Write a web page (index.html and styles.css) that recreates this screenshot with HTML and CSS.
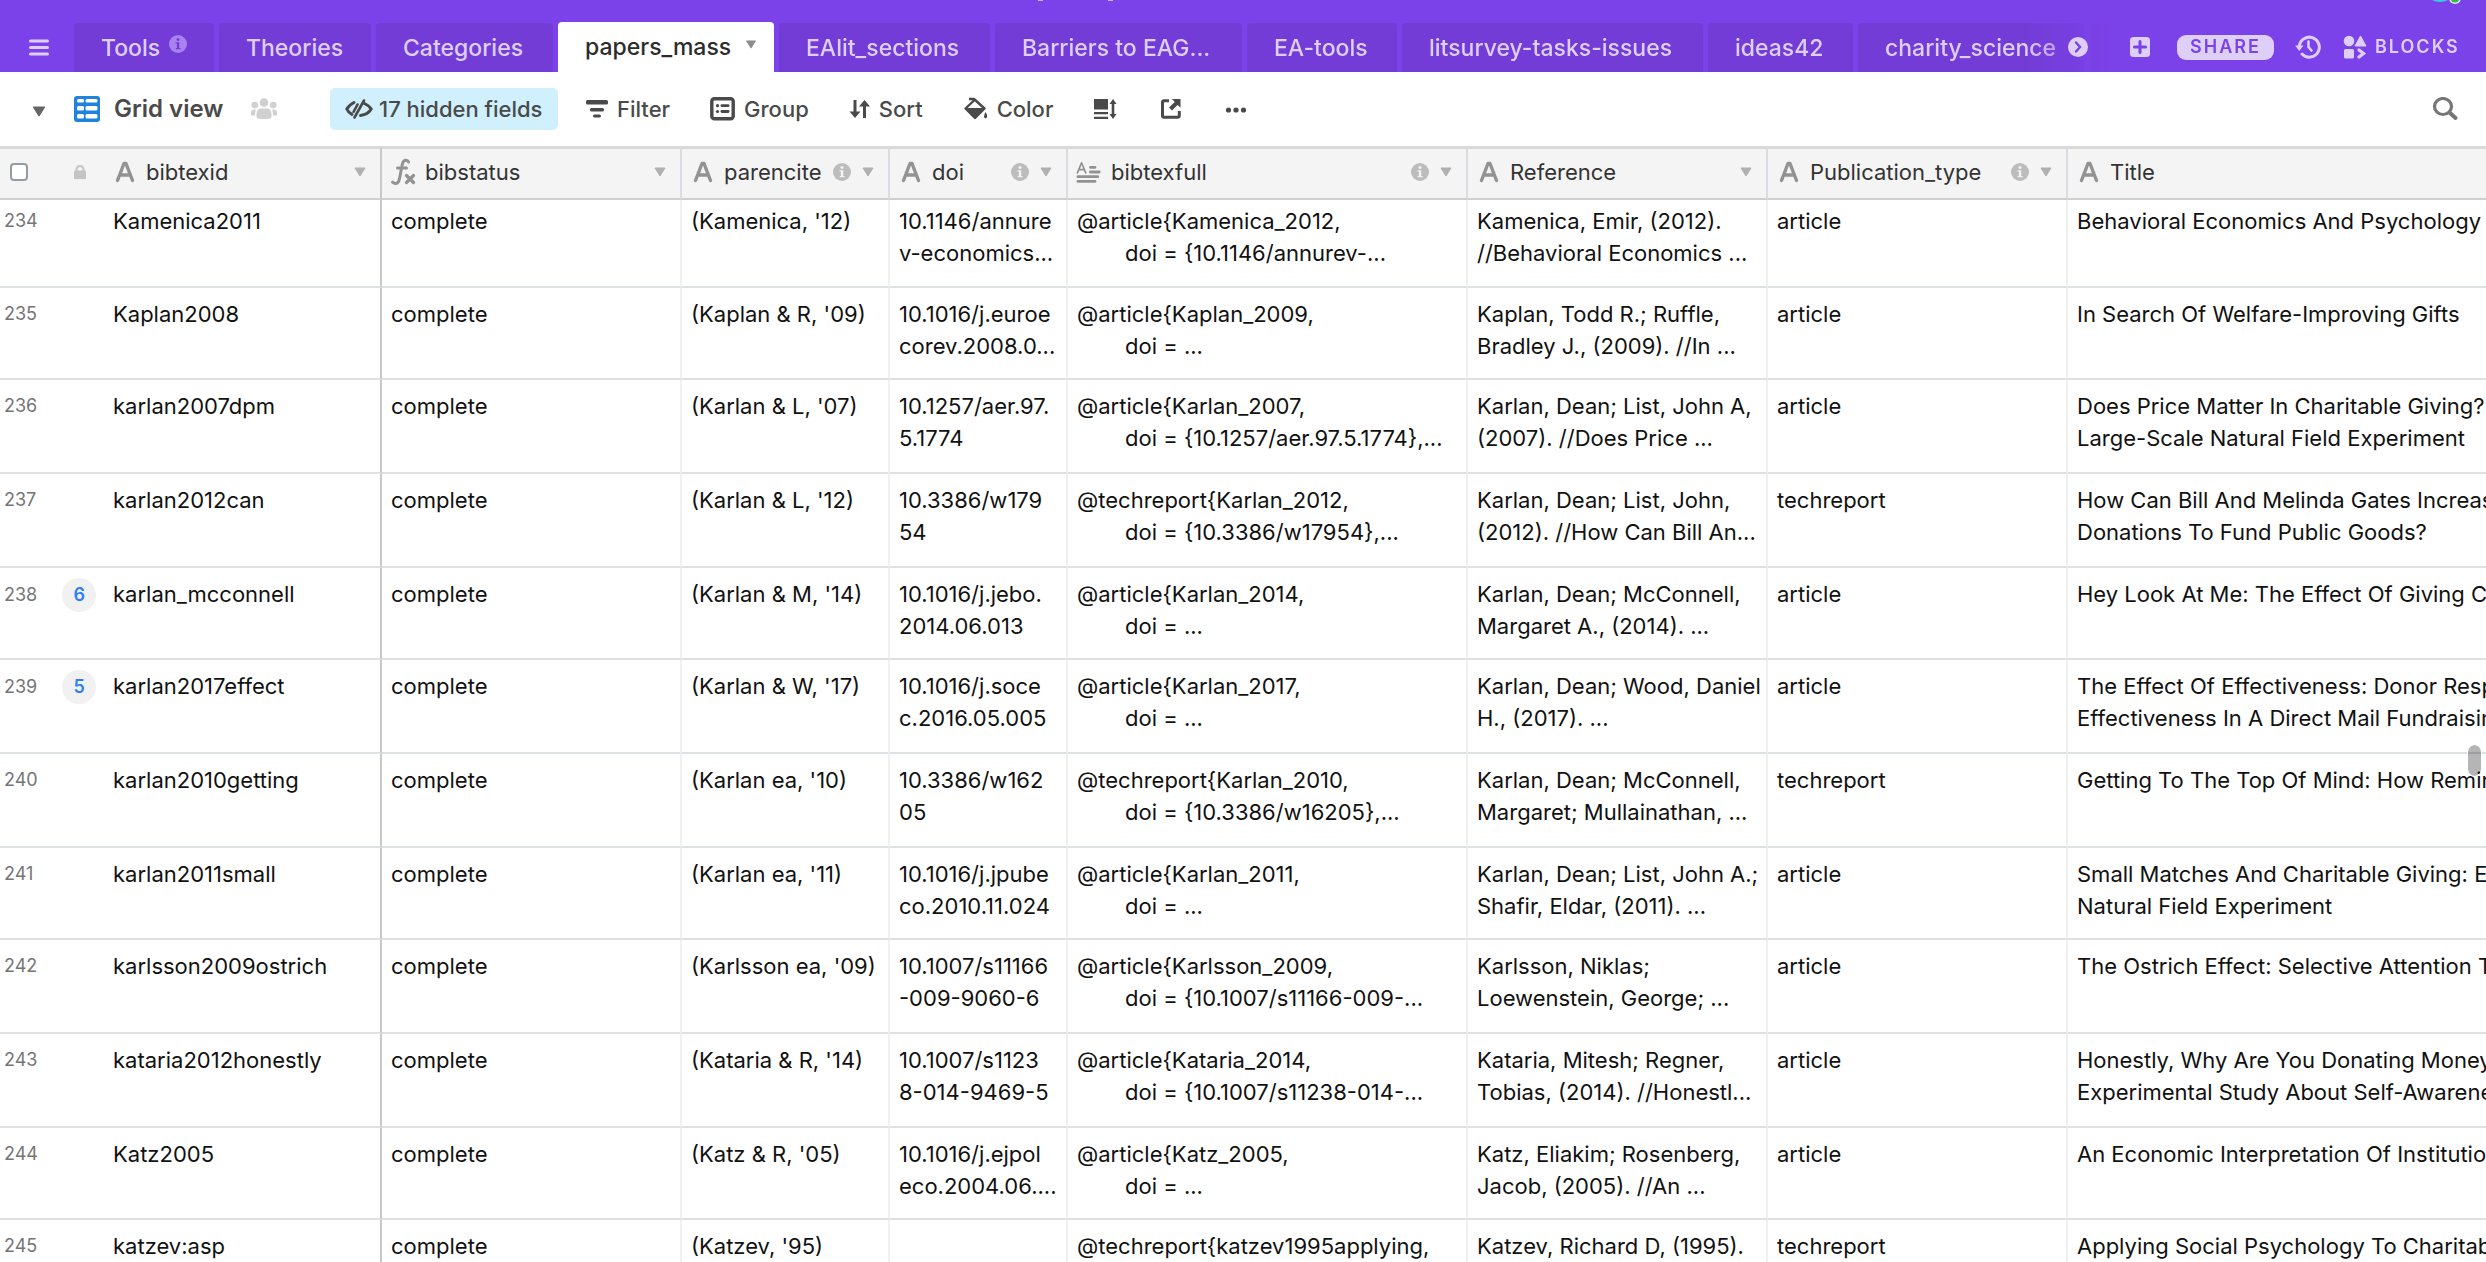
FILE: index.html
```html
<!DOCTYPE html>
<html lang="en">
<head>
<meta charset="utf-8">
<title>papers_mass</title>
<link rel="stylesheet" href="styles.css">
</head>
<body>
<svg class="sprite" aria-hidden="true">
  <symbol id="i-text" viewBox="0 0 20 22"><path d="M2.500 19.500 L9 2.500 H11 L17.500 19.500 M5 14 H15" fill="none" stroke="currentColor" stroke-width="3.400" stroke-linecap="round" stroke-linejoin="round"/></symbol>
  <symbol id="i-long" viewBox="0 0 28 24"><path d="M1.500 13 L6 2 L10.500 13 M3 9.500 H9" fill="none" stroke="currentColor" stroke-width="1.800" stroke-linecap="round" stroke-linejoin="round"/><path d="M15.500 7 H20.500 M15.500 12 H25 M2 17 H23.500 M2 22 H20.500" fill="none" stroke="currentColor" stroke-width="3" stroke-linecap="round"/></symbol>
  <symbol id="i-fx" viewBox="0 0 26 28"><path d="M18.500 4 C17.500 1.200 13.500 1.500 12.500 5.500 L9.500 20.500 C8.700 25.500 5.500 26.800 2.500 24.200 M7.500 10 H16.500" fill="none" stroke="currentColor" stroke-width="3" stroke-linecap="round"/><path d="M16.500 17.500 L23.500 24.500 M23.500 17.500 L16.500 24.500" stroke="currentColor" stroke-width="3.200" stroke-linecap="round"/></symbol>
  <symbol id="i-info" viewBox="0 0 18 18"><circle cx="9" cy="9" r="9" fill="currentColor"/><circle cx="9" cy="4.600" r="1.500" class="hole"/><path d="M6.500 7.300 H10.200 V13 H11.500 V14.300 H6.700 V13 H7.900 V8.600 H6.500 Z" class="hole"/></symbol>
  <symbol id="i-tri" viewBox="0 0 12 10"><path d="M1 1 H11 L6 9 Z" fill="currentColor" stroke="currentColor" stroke-linejoin="round"/></symbol>
</svg>

<header class="topbar">
  <svg class="peek" width="90" height="4" viewBox="0 0 90 4" aria-hidden="true"><path d="M4 0 H9 M74 0 H79" stroke="#c9b3f5" stroke-width="2"/></svg>
  <svg class="presence" width="32" height="4" viewBox="0 0 32 4" aria-hidden="true"><circle cx="10" cy="-14" r="16" fill="#3cc8e0"/><circle cx="25" cy="-2" r="6" fill="#e6dcfa"/><circle cx="25" cy="-2" r="4.500" fill="#2fbf3f"/></svg>
  <button class="menu" aria-label="Menu"><svg width="20" height="17" viewBox="0 0 20 17"><path d="M1.500 2 H18.500 M1.500 8.500 H18.500 M1.500 15 H18.500" stroke="currentColor" stroke-width="3" stroke-linecap="round"/></svg></button>
  <nav class="tabs" aria-label="Tables">
    <a class="tab" href="#tools">Tools<svg class="tab-info" width="18" height="18"><use href="#i-info"/></svg></a>
    <a class="tab" href="#theories">Theories</a>
    <a class="tab" href="#categories">Categories</a>
    <a class="tab active" href="#papers" aria-current="page">papers_mass<svg class="tab-caret" width="12" height="9"><use href="#i-tri"/></svg></a>
    <a class="tab" href="#ealit">EAlit_sections</a>
    <a class="tab" href="#barriers">Barriers to EAG...</a>
    <a class="tab" href="#eatools">EA-tools</a>
    <a class="tab" href="#litsurvey">litsurvey-tasks-issues</a>
    <a class="tab" href="#ideas">ideas42</a>
    <a class="tab" href="#charity">charity_science</a>
    <span class="tab"></span>
  </nav>
  <div class="top-actions">
    <button aria-label="More tables"><svg width="20" height="20" viewBox="0 0 20 20"><circle cx="10" cy="10" r="10" fill="currentColor"/><path d="M8 5.500 L12 10 L8 14.500" class="cut" stroke-width="2.400"/></svg></button>
    <button class="add" aria-label="Add table"><svg width="20" height="20" viewBox="0 0 20 20"><rect width="20" height="20" rx="3.500" fill="currentColor"/><path d="M10 4.500 V15.500 M4.500 10 H15.500" class="cut" stroke-width="3"/></svg></button>
    <button class="share">SHARE</button>
    <button class="history" aria-label="History"><svg width="26" height="24" viewBox="0 0 26 24"><path d="M4.300 12.500 A 10 10 0 1 1 7 19" fill="none" stroke="currentColor" stroke-width="3" stroke-linecap="round"/><path d="M0 10.500 H8.500 L4.300 16 Z" fill="currentColor"/><path d="M13.500 6.500 V12 L16.500 15.500" fill="none" stroke="currentColor" stroke-width="2.600" stroke-linecap="round"/></svg></button>
    <button class="blocks"><svg width="24" height="24" viewBox="0 0 24 24"><circle cx="6" cy="6" r="5.300" fill="currentColor"/><path d="M17.500 1 L23 11 H12 Z" fill="currentColor" stroke="currentColor" stroke-linejoin="round"/><rect x="1" y="14" width="10" height="9.500" rx="1.500" fill="currentColor"/><path d="M16 15 L20.500 18.500 L16 22" fill="none" stroke="currentColor" stroke-width="3.200" stroke-linecap="round"/></svg>BLOCKS</button>
  </div>
</header>

<div class="toolbar">
  <button class="views" aria-label="Views"><svg width="14" height="11"><use href="#i-tri"/></svg></button>
  <button class="view-name"><svg width="26" height="26" viewBox="0 0 26 26"><rect width="26" height="26" rx="3" fill="#1f82dc"/><g fill="#fff"><rect x="3" y="3" width="7" height="3.500" rx="1.500"/><rect x="11.500" y="3" width="12" height="3.500" rx="1.500"/><rect x="3" y="10" width="7" height="4.500" rx="1.500"/><rect x="11.500" y="10" width="12" height="4.500" rx="1.500"/><rect x="3" y="18" width="7" height="4.500" rx="1.500"/><rect x="11.500" y="18" width="12" height="4.500" rx="1.500"/></g></svg>Grid view</button>
  <svg class="people" width="26" height="22" viewBox="0 0 26 22" aria-label="Collaborative view"><g fill="currentColor"><circle cx="13" cy="4.500" r="4.300"/><circle cx="3.800" cy="7" r="3.300"/><circle cx="22.200" cy="7" r="3.300"/><path d="M5.500 21 V16 Q5.500 10.500 11 10.500 H15 Q20.500 10.500 20.500 16 V19 Q20.500 21 13 21 Q5.500 21 5.500 19 Z"/><path d="M0 17.500 V14.500 Q0 11.500 3.500 11.500 H5 Q4 13.500 4 17.500 Z M26 17.500 V14.500 Q26 11.500 22.500 11.500 H21 Q22 13.500 22 17.500 Z"/></g></svg>
  <button class="tool hidden-fields"><svg width="28" height="20" viewBox="0 0 28 20"><g fill="none" stroke="currentColor" stroke-width="3"><path d="M9 3.500 Q4 6 1.800 10 Q3 13 7 15.500" stroke-linecap="round"/><path d="M18.500 4 Q24 6.500 26.200 10 Q23 15.500 15.500 16.500" stroke-linecap="round"/><path d="M19 1.500 L9.500 18.500 M12.500 5.500 L8.500 13" stroke-width="2.600" stroke-linecap="round"/></g></svg>17 hidden fields</button>
  <button class="tool"><svg width="24" height="20" viewBox="0 0 24 20"><g fill="currentColor"><rect x="1" y="1" width="22" height="4.500" rx="1.500"/><rect x="5" y="9" width="14" height="3.500" rx="1.500"/><rect x="8" y="15.500" width="8" height="3" rx="1.500"/></g></svg>Filter</button>
  <button class="tool"><svg width="26" height="24" viewBox="0 0 26 24"><rect x="1.800" y="1.800" width="21.400" height="19.900" rx="2.500" fill="none" stroke="currentColor" stroke-width="3.400"/><g fill="currentColor"><circle cx="7.500" cy="8.700" r="1.600"/><rect x="10.500" y="7.300" width="9" height="2.800" rx="1.400"/><circle cx="7.500" cy="14.500" r="1.600"/><rect x="10.500" y="13.100" width="9" height="2.800" rx="1.400"/></g></svg>Group</button>
  <button class="tool"><svg width="22" height="20" viewBox="0 0 22 20"><path d="M6 1 V16 M15.500 19 V4" stroke="currentColor" stroke-width="3"/><path d="M0.500 12.500 H11.500 L6 19 Z M10 7.500 H21 L15.500 1 Z" fill="currentColor"/></svg>Sort</button>
  <button class="tool"><svg width="26" height="24" viewBox="0 0 26 24"><path d="M6 2 H11 L21.500 11.500 L12 21 L2.500 11.500 L11.500 3" fill="none" stroke="currentColor" stroke-width="2.400" stroke-linejoin="round"/><path d="M2 11 H22 L12 22 Z" fill="currentColor"/><path d="M22.500 15 Q26 20 22.500 21.500 Q19.500 20.500 22.500 15 Z" fill="currentColor"/></svg>Color</button>
  <button class="tool icon-only" aria-label="Row height"><svg width="24" height="20" viewBox="0 0 24 20"><path d="M1 0 H15 V10.500 H1 Z M1 13 H15 V15.200 H1 Z M1 17.800 H15 V20 H1 Z" fill="currentColor"/><path d="M20 3 V17" stroke="currentColor" stroke-width="2.600"/><path d="M16.500 5 H23.500 L20 0 Z M16.500 15 H23.500 L20 20 Z" fill="currentColor"/></svg></button>
  <button class="tool icon-only" aria-label="Share view"><svg width="22" height="20" viewBox="0 0 22 20"><path d="M9 1.800 H4 Q2.500 1.800 2.500 3.500 V16.500 Q2.500 18.200 4 18.200 H17.500 Q19.300 18.200 19.300 16.500 V12" fill="none" stroke="currentColor" stroke-width="3"/><path d="M12 0 H20.500 V8.500 L17.500 6 L12 11.500 L9 8.500 L14.800 3 Z" fill="currentColor"/></svg></button>
  <button class="tool icon-only" aria-label="More"><svg width="22" height="20" viewBox="0 0 22 20"><g fill="currentColor"><circle cx="3.500" cy="11" r="2.600"/><circle cx="11" cy="11" r="2.600"/><circle cx="18.500" cy="11" r="2.600"/></g></svg></button>
  <button class="search" aria-label="Search"><svg width="26" height="24" viewBox="0 0 26 24"><ellipse cx="11" cy="9.500" rx="8.500" ry="8" fill="none" stroke="currentColor" stroke-width="3.200"/><path d="M17.500 15.500 L23.500 21" stroke="currentColor" stroke-width="4" stroke-linecap="round"/></svg></button>
</div>

<main class="grid">
<table>
  <colgroup><col class="c-num"><col class="c-id"><col class="c-wide"><col class="c-cite"><col class="c-doi"><col class="c-full"><col class="c-wide"><col class="c-wide"><col></colgroup>
  <thead>
    <tr>
      <th class="num"><div class="head"><input type="checkbox" aria-label="Select all rows"><svg class="lock" width="12" height="14" viewBox="0 0 12 14"><path d="M2.500 6 V4.500 A3.500 3.500 0 0 1 9.500 4.500 V6" fill="none" stroke="currentColor" stroke-width="2"/><rect y="5.500" width="12" height="8.500" rx="1.200" fill="currentColor"/></svg></div></th>
      <th class="primary"><div class="head"><svg class="type" width="20" height="22"><use href="#i-text"/></svg><span>bibtexid</span><svg class="caret" width="12" height="10"><use href="#i-tri"/></svg></div></th>
      <th><div class="head wide-icon"><svg class="type" width="26" height="28"><use href="#i-fx"/></svg><span>bibstatus</span><svg class="caret" width="12" height="10"><use href="#i-tri"/></svg></div></th>
      <th><div class="head"><svg class="type" width="20" height="22"><use href="#i-text"/></svg><span>parencite</span><svg class="info" width="18" height="18"><use href="#i-info"/></svg><svg class="caret" width="12" height="10"><use href="#i-tri"/></svg></div></th>
      <th><div class="head"><svg class="type" width="20" height="22"><use href="#i-text"/></svg><span>doi</span><svg class="info" width="18" height="18"><use href="#i-info"/></svg><svg class="caret" width="12" height="10"><use href="#i-tri"/></svg></div></th>
      <th><div class="head wide-icon"><svg class="type" width="26" height="24"><use href="#i-long"/></svg><span>bibtexfull</span><svg class="info" width="18" height="18"><use href="#i-info"/></svg><svg class="caret" width="12" height="10"><use href="#i-tri"/></svg></div></th>
      <th><div class="head"><svg class="type" width="20" height="22"><use href="#i-text"/></svg><span>Reference</span><svg class="caret" width="12" height="10"><use href="#i-tri"/></svg></div></th>
      <th><div class="head"><svg class="type" width="20" height="22"><use href="#i-text"/></svg><span>Publication_type</span><svg class="info" width="18" height="18"><use href="#i-info"/></svg><svg class="caret" width="12" height="10"><use href="#i-tri"/></svg></div></th>
      <th><div class="head"><svg class="type" width="20" height="22"><use href="#i-text"/></svg><span>Title</span></div></th>
    </tr>
  </thead>
  <tbody>
    <tr class="under-header"><td class="num">234</td><td class="primary">Kamenica2011</td><td>complete</td><td>(Kamenica, '12)</td><td>10.1146/annure<br>v-economics...</td><td>@article{Kamenica_2012,<br><span class="indent">doi = {10.1146/annurev-...</span></td><td>Kamenica, Emir, (2012).<br>//Behavioral Economics ...</td><td>article</td><td>Behavioral Economics And Psychology Of</td></tr>
    <tr><td class="num">235</td><td class="primary">Kaplan2008</td><td>complete</td><td>(Kaplan &amp; R, '09)</td><td>10.1016/j.euroe<br>corev.2008.0...</td><td>@article{Kaplan_2009,<br><span class="indent">doi = ...</span></td><td>Kaplan, Todd R.; Ruffle,<br>Bradley J., (2009). //In ...</td><td>article</td><td>In Search Of Welfare-Improving Gifts</td></tr>
    <tr><td class="num">236</td><td class="primary">karlan2007dpm</td><td>complete</td><td>(Karlan &amp; L, '07)</td><td>10.1257/aer.97.<br>5.1774</td><td>@article{Karlan_2007,<br><span class="indent">doi = {10.1257/aer.97.5.1774},...</span></td><td>Karlan, Dean; List, John A,<br>(2007). //Does Price ...</td><td>article</td><td>Does Price Matter In Charitable Giving? Evidence<br>Large-Scale Natural Field Experiment</td></tr>
    <tr><td class="num">237</td><td class="primary">karlan2012can</td><td>complete</td><td>(Karlan &amp; L, '12)</td><td>10.3386/w179<br>54</td><td>@techreport{Karlan_2012,<br><span class="indent">doi = {10.3386/w17954},...</span></td><td>Karlan, Dean; List, John,<br>(2012). //How Can Bill An...</td><td>techreport</td><td>How Can Bill And Melinda Gates Increase<br>Donations To Fund Public Goods?</td></tr>
    <tr><td class="num">238<span class="comments">6</span></td><td class="primary">karlan_mcconnell</td><td>complete</td><td>(Karlan &amp; M, '14)</td><td>10.1016/j.jebo.<br>2014.06.013</td><td>@article{Karlan_2014,<br><span class="indent">doi = ...</span></td><td>Karlan, Dean; McConnell,<br>Margaret A., (2014). ...</td><td>article</td><td>Hey Look At Me: The Effect Of Giving Circles</td></tr>
    <tr><td class="num">239<span class="comments">5</span></td><td class="primary">karlan2017effect</td><td>complete</td><td>(Karlan &amp; W, '17)</td><td>10.1016/j.soce<br>c.2016.05.005</td><td>@article{Karlan_2017,<br><span class="indent">doi = ...</span></td><td>Karlan, Dean; Wood, Daniel<br>H., (2017). ...</td><td>article</td><td>The Effect Of Effectiveness: Donor Response<br>Effectiveness In A Direct Mail Fundraising</td></tr>
    <tr><td class="num">240</td><td class="primary">karlan2010getting</td><td>complete</td><td>(Karlan ea, '10)</td><td>10.3386/w162<br>05</td><td>@techreport{Karlan_2010,<br><span class="indent">doi = {10.3386/w16205},...</span></td><td>Karlan, Dean; McConnell,<br>Margaret; Mullainathan, ...</td><td>techreport</td><td>Getting To The Top Of Mind: How Reminders</td></tr>
    <tr><td class="num">241</td><td class="primary">karlan2011small</td><td>complete</td><td>(Karlan ea, '11)</td><td>10.1016/j.jpube<br>co.2010.11.024</td><td>@article{Karlan_2011,<br><span class="indent">doi = ...</span></td><td>Karlan, Dean; List, John A.;<br>Shafir, Eldar, (2011). ...</td><td>article</td><td>Small Matches And Charitable Giving: Evidence<br>Natural Field Experiment</td></tr>
    <tr><td class="num">242</td><td class="primary">karlsson2009ostrich</td><td>complete</td><td>(Karlsson ea, '09)</td><td>10.1007/s11166<br>-009-9060-6</td><td>@article{Karlsson_2009,<br><span class="indent">doi = {10.1007/s11166-009-...</span></td><td>Karlsson, Niklas;<br>Loewenstein, George; ...</td><td>article</td><td>The Ostrich Effect: Selective Attention To</td></tr>
    <tr><td class="num">243</td><td class="primary">kataria2012honestly</td><td>complete</td><td>(Kataria &amp; R, '14)</td><td>10.1007/s1123<br>8-014-9469-5</td><td>@article{Kataria_2014,<br><span class="indent">doi = {10.1007/s11238-014-...</span></td><td>Kataria, Mitesh; Regner,<br>Tobias, (2014). //Honestl...</td><td>article</td><td>Honestly, Why Are You Donating Money To<br>Experimental Study About Self-Awareness</td></tr>
    <tr><td class="num">244</td><td class="primary">Katz2005</td><td>complete</td><td>(Katz &amp; R, '05)</td><td>10.1016/j.ejpol<br>eco.2004.06....</td><td>@article{Katz_2005,<br><span class="indent">doi = ...</span></td><td>Katz, Eliakim; Rosenberg,<br>Jacob, (2005). //An ...</td><td>article</td><td>An Economic Interpretation Of Institutional</td></tr>
    <tr><td class="num">245</td><td class="primary">katzev:asp</td><td>complete</td><td>(Katzev, '95)</td><td></td><td>@techreport{katzev1995applying,</td><td>Katzev, Richard D, (1995).</td><td>techreport</td><td>Applying Social Psychology To Charitable</td></tr>
  </tbody>
</table>
<div class="scroll-thumb"></div>
</main>
</body>
</html>
```
FILE: styles.css
```css
* { box-sizing: border-box; }

html, body { height: 100%; }

body {
  margin: 0;
  display: flex;
  flex-direction: column;
  overflow: hidden;
  background: #fff;
  color: #111;
  font-family: Inter, "Liberation Sans", sans-serif;
  font-size: 22px;
  line-height: 32px;
}

button {
  display: flex;
  align-items: center;
  margin: 0;
  padding: 0;
  border: 0;
  background: none;
  color: inherit;
  font: inherit;
  white-space: nowrap;
}

svg { display: block; flex: none; }

.sprite { position: absolute; width: 0; height: 0; }

/* Top bar */
.topbar {
  position: relative;
  display: flex;
  align-items: flex-end;
  flex: none;
  height: 72px;
  background: #7c42e9;
  color: #decff8;
}

.peek { position: absolute; top: 0; left: 1034px; }
.presence { position: absolute; top: 0; right: 24px; }

.menu { flex: none; width: 74px; height: 50px; padding-left: 29px; }

.tabs {
  display: grid;
  grid-template-columns: 140px 152px 177px 216px 211px 247px 150px 301px 145px 226px 27px;
  column-gap: 5px;
  align-items: end;
  width: 2041px;
  min-width: 0;
  overflow: hidden;
  -webkit-mask-image: linear-gradient(to left, transparent 0, #000 90px);
  mask-image: linear-gradient(to left, transparent 0, #000 90px);
}

.tab {
  display: flex;
  align-items: center;
  height: 49px;
  padding: 0 0 0 27px;
  border-radius: 4px 4px 0 0;
  background: #733cd6;
  color: #decff8;
  font-size: 23px;
  font-weight: 500;
  text-decoration: none;
  white-space: nowrap;
}

.tab.active { height: 50px; background: #fff; color: #2c2c2c; }
.tab-info { margin: 0 0 8px 9px; color: #a883ee; }
.tab-caret { margin: 0 0 6px 14px; color: #8d8d8d; }
.hole { fill: var(--hole, #733cd6); }
.cut { fill: none; stroke: #7c42e9; stroke-linecap: round; }

.top-actions {
  display: flex;
  align-items: center;
  flex: 1;
  height: 50px;
  margin-left: -47px;
  position: relative;
}

.top-actions .add { margin-left: 42px; }

.share {
  justify-content: center;
  width: 97px;
  height: 25px;
  margin: 0 21px 0 27px;
  border-radius: 9px;
  background: #decff8;
  color: #7c42e9;
  font-size: 18px;
  font-weight: 600;
  letter-spacing: 2px;
}

.history { margin-right: 22px; }
.blocks { gap: 8px; font-size: 18px; font-weight: 600; letter-spacing: 2px; }

/* View toolbar */
.toolbar {
  display: flex;
  align-items: center;
  flex: none;
  height: 74px;
  color: #4a4a4a;
  font-weight: 500;
}

.views { width: 74px; padding: 4px 0 0 32px; color: #666; }
.view-name { gap: 14px; width: 177px; font-size: 24px; font-weight: 600; }
.people { color: #d0d0d0; }
.tool { gap: 8px; margin-right: 40px; }
.tool.icon-only { margin-right: 43px; }
.tool.hidden-fields {
  gap: 6px;
  width: 228px;
  height: 42px;
  margin: 0 27px 0 53px;
  padding-left: 15px;
  border-radius: 5px;
  background: #d0f0fd;
}
.search { margin: 0 28px 0 auto; color: #767676; }

/* Record grid */
.grid { position: relative; flex: 1; min-height: 0; overflow: hidden; }

table { width: 100%; min-width: 2300px; table-layout: fixed; border-collapse: separate; border-spacing: 0; }

.c-num { width: 102px; }
.c-id { width: 280px; }
.c-wide { width: 300px; }
.c-cite { width: 208px; }
.c-doi { width: 178px; }
.c-full { width: 400px; }

th {
  height: 54px;
  padding: 0 0 3px;
  border-top: 3px solid #d9d9d9;
  border-right: 2px solid #d9dde1;
  border-bottom: 2px solid #cfcfcf;
  background: #f4f4f4;
  color: #333;
  font-weight: 400;
}

.head { display: flex; align-items: center; padding: 0 14px 0 11px; }
.head.wide-icon { padding-left: 8px; }
.head span { margin: 0 auto 0 11px; }
.head.wide-icon span { margin-left: 9px; }
.type { color: #929292; }
.info { --hole: #f4f4f4; margin: 0 11px 0 0; color: #bdbdbd; }
.caret { color: #b0b0b0; }
.lock { margin-left: 46px; color: #c4c4c4; }

.num .head { padding: 0 0 0 10px; }

input[type="checkbox"] {
  appearance: none;
  width: 18px;
  height: 18px;
  margin: 0;
  border: 2px solid #929da3;
  border-radius: 4px;
  background: #fff;
}

td {
  height: 94px;
  padding: 10px 0 0 9px;
  overflow: hidden;
  border-right: 2px solid #f0f0f0;
  border-bottom: 2px solid #dde1e4;
  vertical-align: top;
  white-space: nowrap;
}

tr:nth-child(3n + 2) td { height: 92px; }
tr.under-header td { height: 88px; padding-top: 5px; }

td.num { padding-left: 4px; border-right: 0; color: #757575; font-size: 18px; }
th.num { border-right: 0; }
td.primary { padding-left: 11px; }
th.primary { border-right-color: #c8c8c8; }
td.primary { border-right-color: #c8c8c8; }
.head span, td { text-align: left; }
.primary .head { padding-left: 13px; }
td:last-child, th:last-child { border-right: 0; }

.indent { padding-left: 48px; }

.comments {
  display: inline-block;
  width: 34px;
  height: 34px;
  margin-left: 25px;
  border-radius: 17px;
  background: #f1f1f1;
  color: #2d7ff9;
  font-weight: 600;
  line-height: 34px;
  text-align: center;
}

.scroll-thumb {
  position: absolute;
  top: 599px;
  right: 5px;
  width: 13px;
  height: 31px;
  border-radius: 7px;
  background: rgba(0, 0, 0, 0.29);
  outline: 1px solid #fff;
}
```
